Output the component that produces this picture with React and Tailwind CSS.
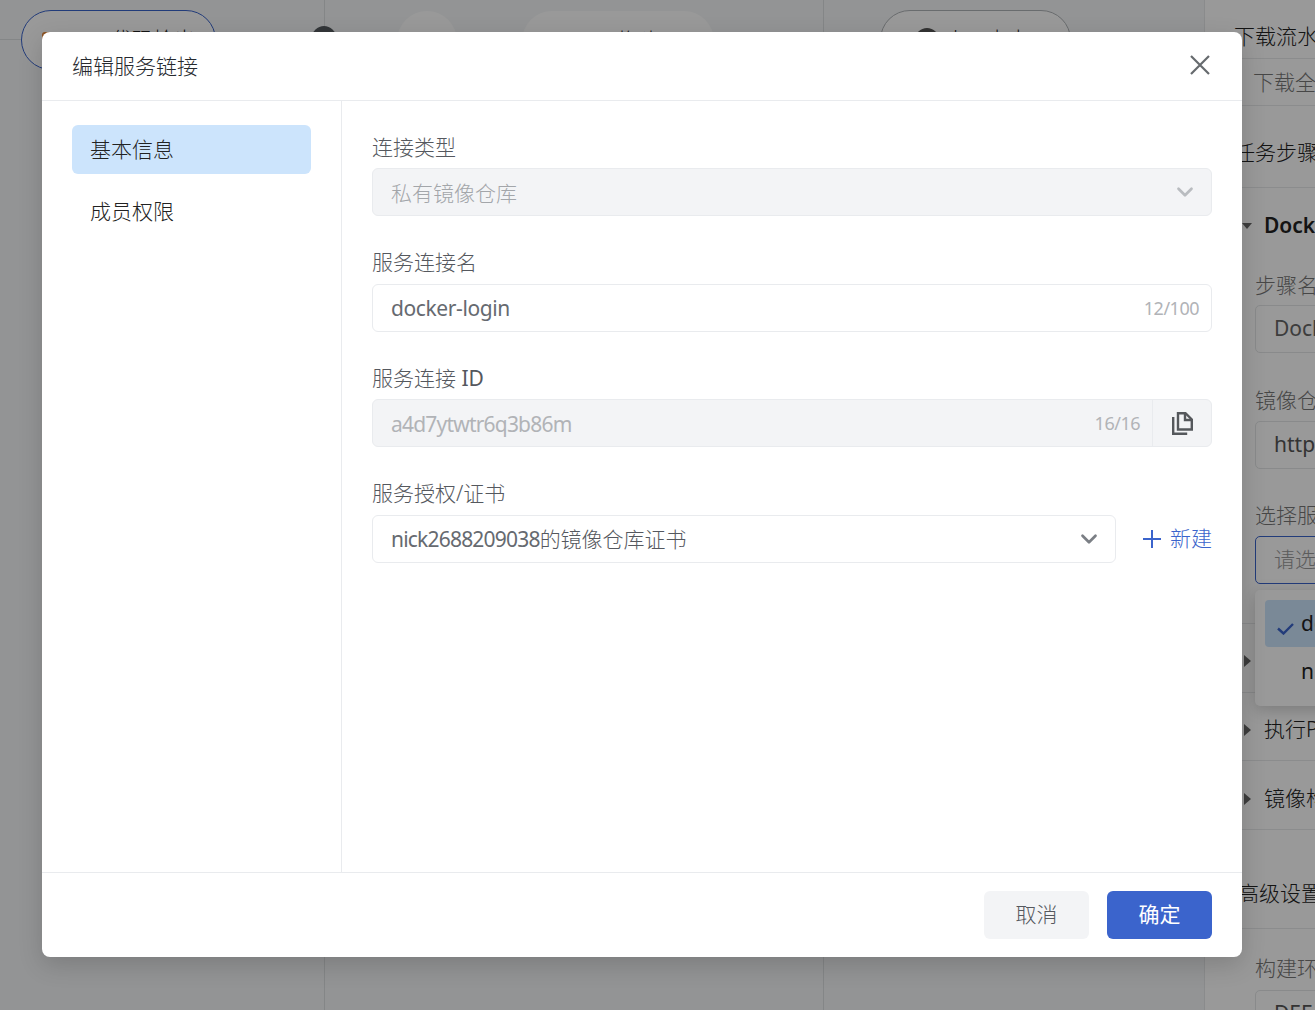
import React from "react";
import { ChevronDown } from "lucide-react";

const FONT = "font-['Noto_Sans','Noto_Sans_CJK_SC',sans-serif]";

function Field({ label, gap, children }) {
  return (
    <div className="mb-[32px]">
      <div className="h-[28px] text-[21px] leading-[28px] text-[#55585e]">{label}</div>
      <div className={gap}>{children}</div>
    </div>
  );
}

function CopyIcon() {
  return (
    <svg width="22" height="23" viewBox="0 0 22 23" className="text-[#55585c]" fill="none" stroke="currentColor" strokeWidth="2.4">
      <path d="M7 1.2h7.5L20.8 7.5v10H7z" />
      <path d="M14 1.2v6.8h6.8" />
      <path d="M2.2 5v16.8h14" />
    </svg>
  );
}

function Bg() {
  return (
    <div className="flex h-[1010px] w-[1315px]">
      <div className="relative flex w-[1204px] shrink-0 bg-[#f5f7f8]">
        <div className="w-[325px] shrink-0 border-r border-[#dcdfe2] pl-[21px] pt-[10px]">
          <div className="flex h-[60px] w-[195px] items-center gap-[53px] rounded-[30px] border border-[#3a64cc] bg-white pl-[20px] text-[21px] text-[#222]">
            <span className="h-[16px] w-[16px] rounded-[3px] bg-[#e8893a]"></span>
            <span>代码检出</span>
          </div>
        </div>
        <div className="flex w-[499px] shrink-0 gap-[65px] border-r border-[#dcdfe2] pl-[72px] pt-[11px]">
          <div className="h-[60px] w-[60px] rounded-full bg-white"></div>
          <div className="flex h-[60px] w-[192px] items-center justify-center rounded-[30px] bg-white pl-[40px] text-[21px] text-[#222]">构建</div>
        </div>
        <div className="pl-[56px] pt-[10px]">
          <div className="flex h-[60px] w-[191px] items-center gap-[6px] rounded-[30px] border border-[#b0b4b8] bg-white pl-[34px] text-[21px] text-[#222]">
            <span className="h-[24px] w-[24px] rounded-full bg-[#555]"></span>
            <span>人工卡点</span>
          </div>
        </div>
        <div className="absolute left-0 top-[39px] h-px w-[21px] bg-[#dcdfe2]"></div>
        <div className="absolute left-[312px] top-[26px] h-[24px] w-[24px] rounded-full bg-[#555a60]"></div>
      </div>
      <div className="relative w-[111px] shrink-0 overflow-hidden whitespace-nowrap border-l border-[#e6e8ea] bg-white text-[21px] text-[#222]">
        <div className="w-[300px] pl-[29px] pt-[23px]">
          <div className="h-[35px] leading-[26px]">下载流水线</div>
          <div className="flex h-[48px] items-center border-y border-[#e8e9eb] pl-[19px] pt-[2px] text-[#777]">下载全部产物</div>
          <div className="flex h-[82px] items-center border-b border-[#e8e9eb] pt-[13px]">任务步骤</div>
          <div className="flex h-[74px] items-center pl-[8px] pt-[2px] font-semibold">
            <span className="mr-[12px] h-0 w-0 border-x-[5px] border-t-[6px] border-x-transparent border-t-[#666]"></span>
            Docker 登录
          </div>
          <div className="pl-[21px]">
            <div className="mt-[9px] h-[29px] leading-[29px] text-[#777]">步骤名称</div>
            <div className="mt-[5px] flex h-[48px] items-center rounded-[5px] border border-[#e4e6e8] pl-[18px] font-normal text-[#666]">Docker 登录</div>
            <div className="mt-[33px] h-[29px] leading-[29px] text-[#777]">镜像仓库地址</div>
            <div className="mt-[6px] flex h-[48px] items-center rounded-[5px] border border-[#e4e6e8] pl-[18px] font-normal text-[#555]">https://</div>
            <div className="mt-[32px] h-[29px] leading-[29px] text-[#777]">选择服务连接</div>
            <div className="mt-[6px] flex h-[48px] items-center rounded-[5px] border border-[#3a64cc] pl-[18px] text-[#999]">请选择</div>
          </div>
          <div className="mt-[39px] flex h-[70px] items-center border-y border-[#e8e9eb] pl-[10px] pt-[6px]">
            <span className="h-0 w-0 border-y-[6px] border-l-[7px] border-y-transparent border-l-[#666]"></span>
          </div>
          <div className="flex h-[68px] items-center border-b border-[#e8e9eb] pl-[10px] pt-[6px]">
            <span className="mr-[13px] h-0 w-0 border-y-[6px] border-l-[7px] border-y-transparent border-l-[#666]"></span>
            执行Python
          </div>
          <div className="flex h-[69px] items-center border-b border-[#e8e9eb] pl-[10px] pt-[8px]">
            <span className="mr-[13px] h-0 w-0 border-y-[6px] border-l-[7px] border-y-transparent border-l-[#666]"></span>
            镜像构建
          </div>
          <div className="flex h-[99px] items-center border-b border-[#e8e9eb] pl-[4px] pt-[30px]">高级设置</div>
          <div className="pl-[21px]">
            <div className="mt-[25px] h-[29px] leading-[29px] text-[#777]">构建环境</div>
            <div className="mt-[7px] flex h-[48px] items-center rounded-[5px] border border-[#e4e6e8] pl-[18px] font-normal text-[#555]">DEFAULT</div>
          </div>
        </div>
        <div className="absolute left-[50px] top-[590px] h-[116px] w-[300px] rounded-[5px] bg-white p-[10px] shadow-[0_4px_16px_rgba(0,0,0,0.2)]">
          <div className="flex h-[47px] items-center rounded-[4px] bg-[#cce4fc] pl-[12px]">
            <svg width="17" height="12" viewBox="0 0 17 12" fill="none" stroke="#3a64cc" strokeWidth="2.4" className="mt-[10px]">
              <path d="M1 5.5l5.5 5L16 1" />
            </svg>
            <span className="ml-[7px] font-normal">docker-login</span>
          </div>
          <div className="flex h-[49px] items-center pl-[36px] font-normal">nick2688209038</div>
        </div>
      </div>
    </div>
  );
}

export default function App() {
  return (
    <div className={`relative h-[1010px] w-[1315px] overflow-hidden font-light ${FONT}`}>
      <Bg />
      <div className="absolute inset-0 bg-black/40 pl-[42px] pt-[32px]">
        <div className="flex h-[925px] w-[1200px] flex-col rounded-[8px] bg-white shadow-[0_8px_24px_rgba(0,0,0,0.16)]">
          <div className="flex h-[69px] shrink-0 items-center justify-between border-b border-[#e9ebee] pl-[30px] pr-[32px]">
            <div className="text-[21px] leading-[28px] text-[#26292e]">编辑服务链接</div>
            <svg width="20" height="20" viewBox="0 0 20 20" fill="none" stroke="#666a6e" strokeWidth="2.2" className="mb-[3px]">
              <path d="M1 1l18 18M19 1L1 19" />
            </svg>
          </div>
          <div className="flex min-h-0 flex-1">
            <div className="w-[300px] shrink-0 border-r border-[#e9ebee] px-[30px] pt-[24px]">
              <div className="flex h-[49px] w-[239px] items-center rounded-[6px] bg-[#cce4fc] pl-[18px] text-[21px] text-[#222]">基本信息</div>
              <div className="mt-[13px] flex h-[49px] w-[239px] items-center pl-[18px] text-[21px] text-[#222]">成员权限</div>
            </div>
            <div className="flex-1 px-[30px] pt-[32px]">
              <Field label="连接类型" gap="mt-[7px]">
                <div className="flex h-[48px] items-center justify-between rounded-[6px] border border-[#e9ebee] bg-[#f3f4f6] pl-[18px] pr-[13px] text-[21px] text-[#a3a6aa]">
                  <span className="pt-[3px]">私有镜像仓库</span>
                  <ChevronDown size={26} strokeWidth={2.5} className="text-[#b9bcc0]" />
                </div>
              </Field>
              <Field label="服务连接名" gap="mt-[8px]">
                <div className="flex h-[48px] items-center justify-between rounded-[6px] border border-[#e9ebee] bg-white pl-[18px] pr-[12px] text-[21px] text-[#666a70]">
                  <span className="pt-[2px] font-normal tracking-[-0.4px]">docker-login</span>
                  <span className="pt-[1px] text-[18px] font-normal tracking-[-0.5px] text-[#b1b3b7]">12/100</span>
                </div>
              </Field>
              <Field label={<>服务连接 <span className="font-normal">ID</span></>} gap="mt-[7px]">
                <div className="flex h-[48px] items-center rounded-[6px] border border-[#e9ebee] bg-[#f3f4f6] pl-[18px] text-[21px] text-[#b1b3b7]">
                  <span className="flex-1 pt-[3px] font-normal tracking-[-0.8px]">a4d7ytwtr6q3b86m</span>
                  <span className="pr-[12px] text-[18px] font-normal tracking-[-0.5px]">16/16</span>
                  <div className="flex h-full w-[59px] items-center justify-center border-l border-[#e9ebee]">
                    <CopyIcon />
                  </div>
                </div>
              </Field>
              <Field label="服务授权/证书" gap="mt-[8px]">
                <div className="flex items-center justify-between">
                  <div className="flex h-[48px] w-[744px] items-center justify-between rounded-[6px] border border-[#e9ebee] bg-white pl-[18px] pr-[13px] text-[21px] text-[#55585e]">
                    <span className="pt-[2px]"><span className="font-normal tracking-[-0.8px] text-[#666a70]">nick2688209038</span>的镜像仓库证书</span>
                    <ChevronDown size={26} strokeWidth={2.5} className="text-[#7b7f85]" />
                  </div>
                  <div className="flex items-center gap-[9px] text-[21px] text-[#3b64cc]">
                    <svg width="18" height="18" viewBox="0 0 18 18" fill="none" stroke="currentColor" strokeWidth="2">
                      <path d="M9 0v18M0 9h18" />
                    </svg>
                    <span>新建</span>
                  </div>
                </div>
              </Field>
            </div>
          </div>
          <div className="flex h-[85px] shrink-0 items-center justify-end gap-[18px] border-t border-[#e9ebee] pr-[30px]">
            <div className="flex h-[48px] w-[105px] items-center justify-center rounded-[6px] bg-[#f3f4f6] text-[21px] text-[#55585e]">取消</div>
            <div className="flex h-[48px] w-[105px] items-center justify-center rounded-[6px] bg-[#3b64cc] text-[21px] font-normal text-white">确定</div>
          </div>
        </div>
      </div>
    </div>
  );
}
